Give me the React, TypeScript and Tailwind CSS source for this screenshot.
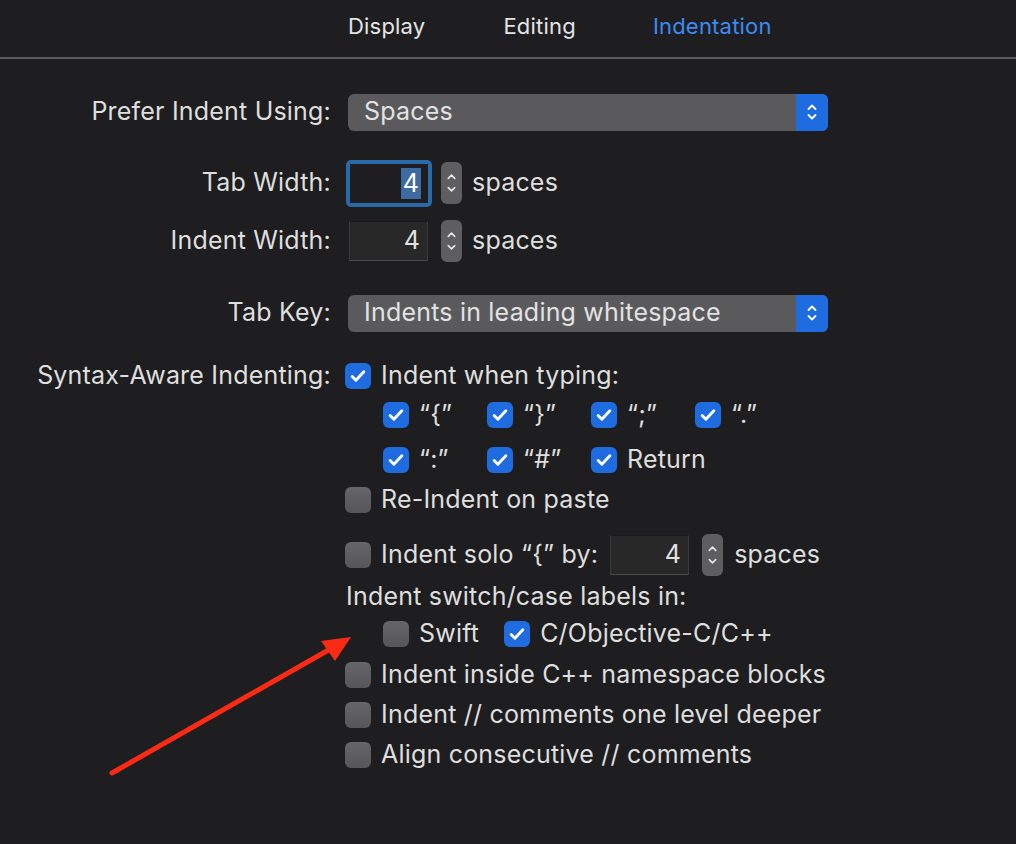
import React from 'react';

const font = { fontFamily: 'Inter, "Noto Sans", sans-serif', letterSpacing: '0.2px' };

function Check({ checked }: { checked: boolean }) {
  if (checked) {
    return (
      <div className="w-[26px] h-[26px] shrink-0 rounded-[6px] bg-[#1f6ce0] flex items-center justify-center">
        <svg width="20" height="20" viewBox="0 0 24 24" fill="none">
          <path d="M5 12.5l4.5 4.5L19 7" stroke="white" strokeWidth="3.4" strokeLinecap="round" strokeLinejoin="round" />
        </svg>
      </div>
    );
  }
  return <div className="w-[26px] h-[26px] shrink-0 rounded-[6px] bg-gradient-to-b from-[#666668] to-[#565658]" />;
}

function Chevrons({ size = 14 }: { size?: number }) {
  return (
    <svg width={size} height={size * 2} viewBox="0 0 12 24" fill="none">
      <path d="M2.5 9L6 5.5L9.5 9" stroke="white" strokeWidth="1.8" strokeLinecap="round" strokeLinejoin="round" />
      <path d="M2.5 15L6 18.5L9.5 15" stroke="white" strokeWidth="1.8" strokeLinecap="round" strokeLinejoin="round" />
    </svg>
  );
}

function Popup({ value }: { value: string }) {
  return (
    <div className="w-[480px] h-[37px] rounded-[6px] bg-[#5a5a5c] flex items-center overflow-hidden">
      <span className="flex-1 pl-4 text-[25px] text-[#e2e2e2]">{value}</span>
      <div className="w-[32px] h-full bg-[#1f6ce0] flex items-center justify-center">
        <Chevrons size={12} />
      </div>
    </div>
  );
}

function Stepper() {
  return (
    <div className="w-[21px] h-[42px] rounded-[6px] bg-[#5e5e60] flex items-center justify-center">
      <svg width="11" height="28" viewBox="0 0 12 28" fill="none">
        <path d="M2.5 9L6 5.5L9.5 9" stroke="#e5e5e5" strokeWidth="1.8" strokeLinecap="round" strokeLinejoin="round" />
        <path d="M2.5 19L6 22.5L9.5 19" stroke="#e5e5e5" strokeWidth="1.8" strokeLinecap="round" strokeLinejoin="round" />
      </svg>
    </div>
  );
}

function Field({ value, w = 79 }: { value: string; w?: number }) {
  return (
    <div
      className="h-[40px] bg-[#282829] border border-[#3a3a3c] border-t-[#1a1a1b] border-b-[#4a4a4c] flex items-center justify-end pr-[7px] text-[25px] text-[#e2e2e2]"
      style={{ width: w }}
    >
      {value}
    </div>
  );
}

function Label({ children }: { children?: React.ReactNode }) {
  return <div className="w-[331px] shrink-0 text-right text-[25px] text-[#dedede]">{children}</div>;
}

function CheckRow({ checked, label, className = '' }: { checked: boolean; label: string; className?: string }) {
  return (
    <div className={`flex items-center gap-[10px] ${className}`}>
      <Check checked={checked} />
      <span className="text-[25px] text-[#dedede] whitespace-nowrap">{label}</span>
    </div>
  );
}

export default function App() {
  return (
    <div className="relative w-[1016px] h-[844px] bg-[#1e1e20] overflow-hidden" style={font}>
      <div className="h-[57px] pb-[5px] flex items-center text-[22px]">
        <span className="ml-[348px] text-[#e4e4e4]">Display</span>
        <span className="ml-[78px] text-[#e4e4e4]">Editing</span>
        <span className="ml-[77px] text-[#3d8af2]">Indentation</span>
      </div>
      <div className="h-[2px] bg-[#5a5a5c]" />

      <div className="flex flex-col">
        <div className="mt-[33px] h-[40px] flex items-center">
          <Label>Prefer Indent Using:</Label>
          <div className="ml-[17px]">
            <Popup value="Spaces" />
          </div>
        </div>

        <div className="mt-[27px] h-[48px] flex items-center">
          <Label>Tab Width:</Label>
          <div className="ml-[15px] w-[86px] h-[47px] rounded-[5px] bg-[#2a6aa8] p-[4px]">
            <div className="w-full h-full bg-[#1e1e20] flex items-center justify-end pr-[7px]">
              <span className="bg-[#3d6aa0] text-white text-[25px] leading-[31px] px-[2px]">4</span>
            </div>
          </div>
          <div className="ml-[9px]">
            <Stepper />
          </div>
          <span className="ml-[10px] text-[25px] text-[#dedede]">spaces</span>
        </div>

        <div className="mt-[14px] h-[40px] flex items-center">
          <Label>Indent Width:</Label>
          <div className="ml-[18px]">
            <Field value="4" />
          </div>
          <div className="ml-[13px]">
            <Stepper />
          </div>
          <span className="ml-[10px] text-[25px] text-[#dedede]">spaces</span>
        </div>

        <div className="mt-[32px] h-[40px] flex items-center">
          <Label>Tab Key:</Label>
          <div className="ml-[17px]">
            <Popup value="Indents in leading whitespace" />
          </div>
        </div>

        <div className="mt-[25px] h-[36px] flex items-center">
          <Label>Syntax-Aware Indenting:</Label>
          <CheckRow className="ml-[14px]" checked label="Indent when typing:" />
        </div>

        <div className="mt-[3px] h-[36px] flex items-center pl-[383px]">
          {['“{”', '“}”', '“;”', '“.”'].map((l) => (
            <CheckRow key={l} className="w-[104px]" checked label={l} />
          ))}
        </div>

        <div className="mt-[9px] h-[36px] flex items-center pl-[383px]">
          {['“:”', '“#”', 'Return'].map((l) => (
            <CheckRow key={l} className="w-[104px]" checked label={l} />
          ))}
        </div>

        <div className="mt-[4px] h-[36px] flex items-center pl-[345px]">
          <CheckRow checked={false} label="Re-Indent on paste" />
        </div>

        <div className="mt-[17px] h-[40px] flex items-center pl-[345px]">
          <CheckRow checked={false} label="Indent solo “{” by:" />
          <div className="ml-[12px]">
            <Field value="4" />
          </div>
          <div className="ml-[13px]">
            <Stepper />
          </div>
          <span className="ml-[11px] text-[25px] text-[#dedede]">spaces</span>
        </div>

        <div className="mt-[4px] h-[36px] flex items-center pl-[346px]">
          <span className="text-[25px] text-[#dedede]">Indent switch/case labels in:</span>
        </div>

        <div className="mt-[1px] h-[36px] flex items-center pl-[383px]">
          <CheckRow checked={false} label="Swift" />
          <CheckRow className="ml-[25px]" checked label="C/Objective-C/C++" />
        </div>

        <div className="mt-[5px] h-[36px] flex items-center pl-[345px]">
          <CheckRow checked={false} label="Indent inside C++ namespace blocks" />
        </div>
        <div className="mt-[4px] h-[36px] flex items-center pl-[345px]">
          <CheckRow checked={false} label="Indent // comments one level deeper" />
        </div>
        <div className="mt-[4px] h-[36px] flex items-center pl-[345px]">
          <CheckRow checked={false} label="Align consecutive // comments" />
        </div>
      </div>

      <svg className="absolute left-0 top-0 pointer-events-none" width="1016" height="844" viewBox="0 0 1016 844">
        <line x1="112" y1="773" x2="332" y2="648" stroke="#fb2a14" strokeWidth="5" strokeLinecap="round" />
        <polygon points="351,637 321,641 335,661" fill="#fb2a14" />
      </svg>
    </div>
  );
}
